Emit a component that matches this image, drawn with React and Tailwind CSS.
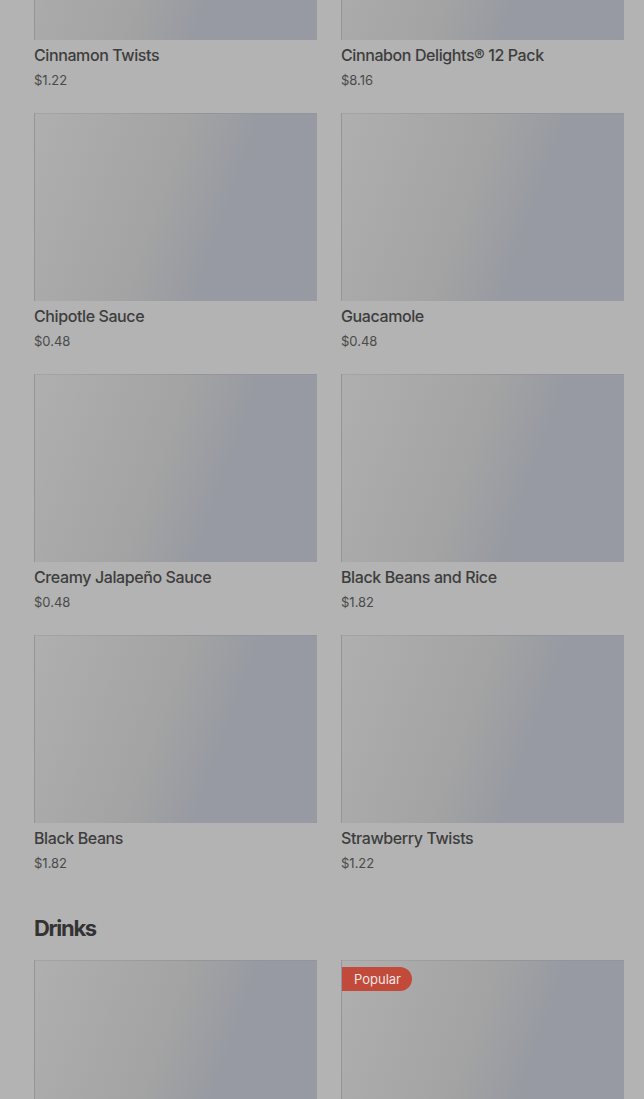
// Menu grid, scrolled mid-page, under a dimmed overlay look

const sides = [
  { name: "Cinnamon Twists", price: "$1.22" },
  { name: "Cinnabon Delights® 12 Pack", price: "$8.16" },
  { name: "Chipotle Sauce", price: "$0.48" },
  { name: "Guacamole", price: "$0.48" },
  { name: "Creamy Jalapeño Sauce", price: "$0.48" },
  { name: "Black Beans and Rice", price: "$1.82" },
  { name: "Black Beans", price: "$1.82" },
  { name: "Strawberry Twists", price: "$1.22" },
];

const drinks = [
  { name: "", price: "" },
  { name: "", price: "", popular: true },
];

const ItemImage = ({ popular }) => (
  <div className="relative h-[188px] w-full bg-linear-110 from-[#afafaf] from-0% via-[#a3a3a3] via-45% to-[#979aa2] to-65% border-t border-l border-black/[0.03]">
    {popular && (
      <span className="absolute left-0 top-[6px] h-6 pl-3 pr-[11px] rounded-r-full bg-[#c24a3a] text-[#f1e6e4] text-[13px] leading-6">
        Popular
      </span>
    )}
  </div>
);

const ItemCard = ({ item }) => (
  <div className="flex flex-col">
    <ItemImage popular={item.popular} />
    {item.name && (
      <>
        <p className="mt-[5px] text-[16px] leading-5 font-medium text-[#3d3d3d] tracking-[-0.025em]">
          {item.name}
        </p>
        <p className="mt-[6px] text-[13px] leading-[18px] text-[#4a4a4a]">
          {item.price}
        </p>
      </>
    )}
  </div>
);

export default function App() {
  return (
    <div
      className="h-screen overflow-hidden bg-[#b3b3b3]"
      style={{ fontFamily: "Inter, 'Noto Sans', sans-serif" }}
    >
      <div className="-mt-[148px] pl-[34px] pr-[20px]">
        <div className="grid grid-cols-2 gap-x-6 gap-y-6">
          {sides.map((item) => (
            <ItemCard key={item.name} item={item} />
          ))}
        </div>

        <h2 className="mt-10 mb-4 text-[22px] leading-8 font-bold tracking-[-0.06em] text-[#333333]">
          Drinks
        </h2>

        <div className="grid grid-cols-2 gap-x-6 gap-y-6">
          {drinks.map((item, i) => (
            <ItemCard key={i} item={item} />
          ))}
        </div>
      </div>
    </div>
  );
}
